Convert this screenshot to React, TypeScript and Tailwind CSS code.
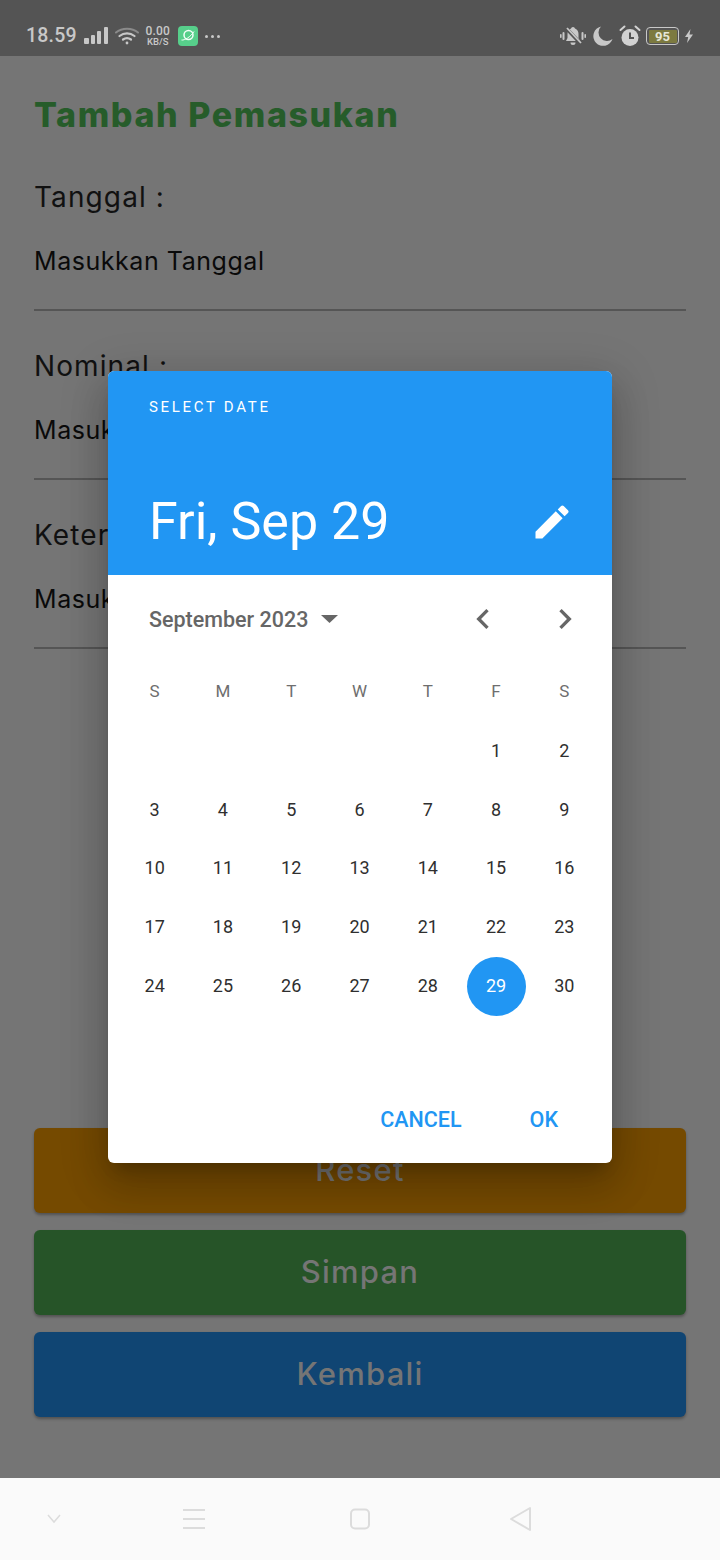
const days = ["S", "M", "T", "W", "T", "F", "S"]
const blanks = [0, 1, 2, 3, 4]
const dates = Array.from({ length: 30 }, (_, i) => i + 1)

function StatusBar() {
  return (
    <div className="h-14 bg-[#545454] flex items-center justify-between pt-[16px] pl-[26px] pr-[26px] text-[#c8c8c8]">
      <div className="flex items-center">
        <span className="text-[19.5px] font-['Roboto',sans-serif] font-medium leading-none tracking-[0.2px]">18.59</span>
        <svg width="25" height="18" viewBox="0 0 25 18" className="ml-[7px]" fill="#c8c8c8">
          <rect x="0" y="11" width="5" height="6" rx="1" />
          <rect x="7" y="8" width="4" height="9" rx="1" />
          <rect x="13" y="4" width="4" height="13" rx="1" />
          <rect x="20" y="0" width="4" height="17" rx="1" />
        </svg>
        <svg width="24" height="18" viewBox="0 0 24 18" className="ml-[6px]" fill="none" stroke="#c8c8c8" strokeLinecap="round">
          <path d="M1 5.5C7 .5 17 .5 23 5.5" strokeWidth="2" stroke="#8a8a8a" />
          <path d="M4.5 9C9 5.5 15 5.5 19.5 9" strokeWidth="2.2" />
          <path d="M8 12.5c2.500-1.800 5.500-1.800 8 0" strokeWidth="2.2" />
          <circle cx="12" cy="16" r="1.400" fill="#c8c8c8" stroke="none" />
        </svg>
        <div className="ml-[6px] w-[26px] flex flex-col items-center font-['Roboto',sans-serif] font-medium leading-none">
          <span className="text-[12px] leading-[11px] tracking-[0.2px]">0.00</span>
          <span className="text-[9.5px] leading-[9px]">KB/S</span>
        </div>
        <div className="ml-[7px] w-5 h-5 rounded-[4px] bg-[#57cf8b] flex items-center justify-center">
          <svg width="16" height="16" viewBox="0 0 16 16" fill="none" stroke="#f2fff8" strokeWidth="1.500">
            <circle cx="8.500" cy="7" r="4.500" />
            <path d="M1.500 12c3 .5 9-3 12.500-8.500" strokeWidth="1" />
          </svg>
        </div>
        <div className="ml-[7px] flex gap-[3px]">
          <span className="w-[3px] h-[3px] rounded-full bg-[#c8c8c8]" />
          <span className="w-[3px] h-[3px] rounded-full bg-[#c8c8c8]" />
          <span className="w-[3px] h-[3px] rounded-full bg-[#c8c8c8]" />
        </div>
      </div>
      <div className="flex items-center">
        <svg width="26" height="22" viewBox="0 0 26 22" fill="#c8c8c8">
          <path d="M13 2a2 2 0 0 1 2 1.600c2.500 1 3.500 3 3.500 5.400v4l1.500 3H6l1.500-3V9c0-2.400 1-4.400 3.500-5.400A2 2 0 0 1 13 2z" />
          <path d="M10.500 17.500h5a2.500 2.500 0 0 1-5 0z" />
          <rect x="2.500" y="7" width="2" height="8" rx="1" />
          <rect x="0" y="9" width="1.600" height="4" rx=".8" />
          <rect x="21.500" y="7" width="2" height="8" rx="1" />
          <rect x="24.400" y="9" width="1.600" height="4" rx=".8" />
          <path d="M6 3l15 16" stroke="#545454" strokeWidth="3.500" />
          <path d="M7 3l14 15" stroke="#c8c8c8" strokeWidth="1.800" />
        </svg>
        <svg width="20" height="20" viewBox="0 0 20 20" fill="#c8c8c8" className="ml-[7px]">
          <path d="M8 .5A9.800 9.800 0 1 0 19.500 13 8.500 8.500 0 0 1 8 .5z" />
        </svg>
        <svg width="22" height="22" viewBox="0 0 22 22" className="ml-[6px]" fill="none">
          <circle cx="11" cy="12.500" r="8.500" fill="#d2d2d2" />
          <path d="M11 7.500v5.500h4" stroke="#545454" strokeWidth="2" />
          <path d="M1.500 5 5.500 1.500M20.500 5 16.500 1.500" stroke="#d2d2d2" strokeWidth="2" strokeLinecap="round" />
        </svg>
        <div className="ml-[5px] w-[33px] h-[18px] rounded-[4px] border-[1.5px] border-[#c8c8c8] p-[1.5px] flex">
          <div className="flex-1 bg-[#7c7a40] rounded-[1px] flex items-center justify-center text-[13px] leading-none font-bold font-['Roboto',sans-serif] text-[#e6e6d6]">95</div>
        </div>
        <svg width="10" height="14" viewBox="0 0 10 14" fill="#c8c8c8" className="ml-[5px]">
          <path d="M6.500 0 1 8h3.200L3 14l6-8.500H5.500z" />
        </svg>
      </div>
    </div>
  )
}

function Field({ label, placeholder }: { label: string; placeholder: string }) {
  return (
    <div className="h-[169px]">
      <div className="text-[28px] leading-[40px] tracking-[1.1px] text-[#111] font-['Inter',sans-serif]">{label}</div>
      <div className="mt-[26px] pb-[29px] border-b-2 border-[#555] text-[25px] leading-[37px] tracking-[0.55px] text-[#0a0a0a] font-['Inter',sans-serif]">{placeholder}</div>
    </div>
  )
}

function ActionButton({ label, color }: { label: string; color: string }) {
  return (
    <div className={`h-[85px] rounded-[6px] flex items-center justify-center text-[31px] tracking-[1.2px] font-medium text-[#757575] font-['Inter',sans-serif] shadow-[0_2px_3px_rgba(0,0,0,0.3)] ${color}`}>
      {label}
    </div>
  )
}

function Header() {
  return (
    <div className="h-[204px] bg-[#2196f3] text-white pl-[41px] pr-[38px] flex flex-col">
      <div className="mt-[28px] text-[15px] leading-4 tracking-[2.7px]">SELECT DATE</div>
      <div className="mt-[77px] flex items-center justify-between">
        <span className="text-[52px] leading-[60px]">Fri, Sep 29</span>
        <svg width="44" height="44" viewBox="0 0 24 24" fill="white">
          <path d="M3 17.250V21h3.750L17.810 9.940l-3.750-3.750L3 17.250zM20.710 7.040a1 1 0 0 0 0-1.410l-2.340-2.340a1 1 0 0 0-1.410 0l-1.830 1.830 3.750 3.750 1.830-1.830z" />
        </svg>
      </div>
    </div>
  )
}

function Calendar() {
  return (
    <div className="px-[12px] text-[#2f2f2f]">
      <div className="h-[88px] pl-[29px] pr-[15px] flex items-center justify-between text-[#666]">
        <div className="flex items-center">
          <span className="pt-[2px] text-[21.5px] font-medium">September 2023</span>
          <svg width="17" height="8" viewBox="0 0 17 8" className="ml-[13px]" fill="#666">
            <path d="M0 0h17L8.500 8z" />
          </svg>
        </div>
        <div className="flex items-center gap-[42px]">
          <svg width="40" height="40" viewBox="0 0 24 24" fill="#666">
            <path d="M15.410 7.410 14 6l-6 6 6 6 1.410-1.410L10.830 12z" />
          </svg>
          <svg width="40" height="40" viewBox="0 0 24 24" fill="#666">
            <path d="M8.590 16.590 10 18l6-6-6-6-1.410 1.410L13.170 12z" />
          </svg>
        </div>
      </div>
      <div className="grid grid-cols-7 w-[478px] ml-[0.5px] text-[18px]">
        {days.map((d, i) => (
          <div key={i} className="h-[59px] pb-[1px] flex items-center justify-center text-[#6e6e6e] text-[17px]">{d}</div>
        ))}
        {blanks.map(b => <div key={b} className="h-[58.750px]" />)}
        {dates.map(d => (
          <div key={d} className="h-[58.750px] flex items-center justify-center">
            {d === 29 ? (
              <span className="w-[59px] h-[59px] pb-[2px] rounded-full bg-[#2196f3] text-white flex items-center justify-center">{d}</span>
            ) : <span className="pb-[2px]">{d}</span>}
          </div>
        ))}
      </div>
    </div>
  )
}

export default function App() {
  return (
    <div className="relative w-[720px] h-[1560px] flex flex-col bg-white font-['Roboto',sans-serif] overflow-hidden">
      <StatusBar />

      <div className="relative flex-1 bg-[#757575] px-[34px] flex flex-col">
        <h1 className="mt-[39px] text-[34px] leading-[40px] tracking-[1.6px] font-extrabold text-[#265c2a] font-['Inter',sans-serif]">Tambah Pemasukan</h1>
        <div className="mt-[42px]">
          <Field label="Tanggal :" placeholder="Masukkan Tanggal" />
          <Field label="Nominal :" placeholder="Masukkan Nominal" />
          <Field label="Keterangan :" placeholder="Masukkan Keterangan" />
        </div>
        <div className="mt-auto mb-[61px] flex flex-col gap-[17px]">
          <ActionButton label="Reset" color="bg-[#754a00]" />
          <ActionButton label="Simpan" color="bg-[#265428]" />
          <ActionButton label="Kembali" color="bg-[#104573]" />
        </div>
      </div>

      {/* date picker floats over the form */}
      <div className="absolute left-[108px] top-[371px] w-[504px] h-[792px] bg-white rounded-[6px] overflow-hidden shadow-[0_11px_15px_-7px_rgba(0,0,0,0.2),0_24px_38px_3px_rgba(0,0,0,0.14),0_9px_46px_8px_rgba(0,0,0,0.12)] flex flex-col">
        <Header />
        <Calendar />
        <div className="mt-auto h-[88px] flex items-start justify-end pr-[54px] pt-[30px] gap-[68px] text-[#2196f3] text-[21.5px] leading-[30px] font-medium">
          <span>CANCEL</span>
          <span>OK</span>
        </div>
      </div>

      <div className="h-[82px] bg-[#fafafa] relative flex items-center">
        <svg width="14" height="10" viewBox="0 0 14 10" fill="none" stroke="#dcdcdc" strokeWidth="1.500" className="ml-[47px]">
          <path d="M1 1l6 7 6-7" />
        </svg>
        <svg width="22" height="22" viewBox="0 0 22 22" fill="none" stroke="#dcdcdc" strokeWidth="2" className="ml-[122px]">
          <path d="M0 2h22M0 11h22M0 20h22" />
        </svg>
        <svg width="22" height="22" viewBox="0 0 22 22" fill="none" stroke="#dcdcdc" strokeWidth="2" className="ml-[144px]">
          <rect x="2" y="1.500" width="18" height="19" rx="4" />
        </svg>
        <svg width="24" height="26" viewBox="0 0 24 26" fill="none" stroke="#dcdcdc" strokeWidth="2" strokeLinejoin="round" className="ml-[138px]">
          <path d="M21 2v22L2 13z" />
        </svg>
      </div>
    </div>
  )
}
